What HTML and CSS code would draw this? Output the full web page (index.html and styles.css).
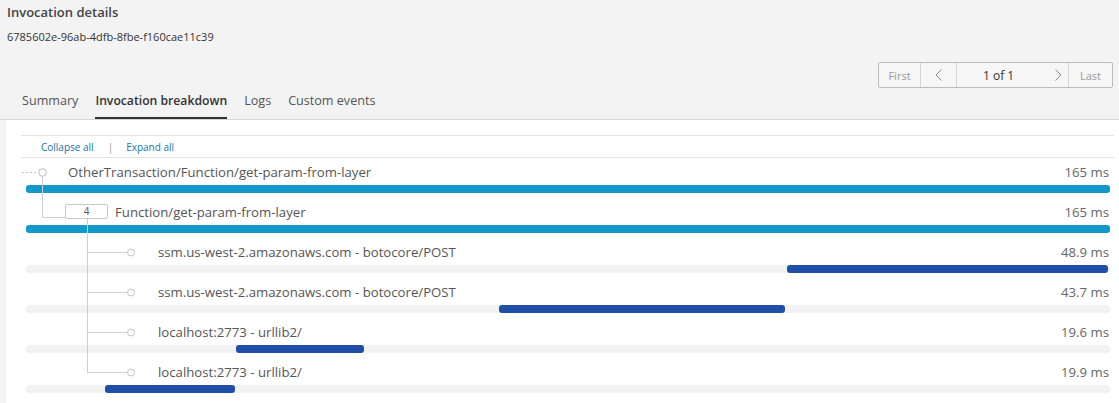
FILE: index.html
```html
<!DOCTYPE html>
<html lang="en">
<head>
<meta charset="utf-8">
<title>Invocation details</title>
<link rel="stylesheet" href="styles.css">
</head>
<body>
<header class="page-head">
  <h1 class="title">Invocation details</h1>
  <div class="uuid">6785602e-96ab-4dfb-8fbe-f160cae11c39</div>
</header>

<div class="pager-row">
  <div class="pager">
    <span class="pg-btn pg-first">First</span>
    <span class="pg-btn pg-prev"><svg width="8" height="12" viewBox="0 0 8 12"><polyline points="6.5,0.5 1,6 6.5,11.5" fill="none" stroke="#8a8a8a" stroke-width="1"/></svg></span>
    <span class="pg-mid"><span class="pg-count">1 of 1</span><svg class="pg-next" width="8" height="12" viewBox="0 0 8 12"><polyline points="1.5,0.5 7,6 1.5,11.5" fill="none" stroke="#8a8a8a" stroke-width="1"/></svg></span>
    <span class="pg-btn pg-last">Last</span>
  </div>
</div>

<nav class="tabs">
  <span class="tab">Summary</span>
  <span class="tab tab-active">Invocation breakdown</span>
  <span class="tab">Logs</span>
  <span class="tab">Custom events</span>
</nav>

<section class="panel">
  <div class="toolbar">
    <span class="link">Collapse all</span>
    <span class="sep">|</span>
    <span class="link">Expand all</span>
  </div>
  <div class="trace">
    <svg class="tree" width="140" height="220" viewBox="0 0 140 220">
      <line x1="1" y1="14.5" x2="17" y2="14.5" stroke="#c4c4c4" stroke-width="1" stroke-dasharray="2 2"/>
      <line x1="21.5" y1="18" x2="21.5" y2="59.5" stroke="#cfcfcf" stroke-width="1"/>
      <line x1="21.5" y1="59.5" x2="44" y2="59.5" stroke="#cfcfcf" stroke-width="1"/>
      <circle cx="21.5" cy="14.5" r="3.8" fill="#fff" stroke="#b9b9b9" stroke-width="1"/>
      <line x1="66.5" y1="60" x2="66.5" y2="214.5" stroke="#cfcfcf" stroke-width="1"/>
      <line x1="66.5" y1="94.5" x2="106" y2="94.5" stroke="#cfcfcf" stroke-width="1"/>
      <line x1="66.5" y1="134.5" x2="106" y2="134.5" stroke="#cfcfcf" stroke-width="1"/>
      <line x1="66.5" y1="174.5" x2="106" y2="174.5" stroke="#cfcfcf" stroke-width="1"/>
      <line x1="66.5" y1="214.5" x2="106" y2="214.5" stroke="#cfcfcf" stroke-width="1"/>
      <circle cx="110" cy="94.5" r="3.5" fill="#fff" stroke="#c4c4c4" stroke-width="1"/>
      <circle cx="110" cy="134.5" r="3.5" fill="#fff" stroke="#c4c4c4" stroke-width="1"/>
      <circle cx="110" cy="174.5" r="3.5" fill="#fff" stroke="#c4c4c4" stroke-width="1"/>
      <circle cx="110" cy="214.5" r="3.5" fill="#fff" stroke="#c4c4c4" stroke-width="1"/>
    </svg>

    <div class="row">
      <div class="row-head lvl-0"><span class="label">OtherTransaction/Function/get-param-from-layer</span><span class="time">165 ms</span></div>
      <div class="track"><div class="bar bar-root" style="margin-left:0%;width:100%"></div></div>
    </div>
    <div class="row">
      <div class="row-head lvl-1"><span class="count">4</span><span class="label">Function/get-param-from-layer</span><span class="time">165 ms</span></div>
      <div class="track"><div class="bar bar-root" style="margin-left:0%;width:100%"></div></div>
    </div>
    <div class="row">
      <div class="row-head lvl-2"><span class="label">ssm.us-west-2.amazonaws.com - botocore/POST</span><span class="time">48.9 ms</span></div>
      <div class="track"><div class="bar bar-seg" style="margin-left:70.2%;width:29.6%"></div></div>
    </div>
    <div class="row">
      <div class="row-head lvl-2"><span class="label">ssm.us-west-2.amazonaws.com - botocore/POST</span><span class="time">43.7 ms</span></div>
      <div class="track"><div class="bar bar-seg" style="margin-left:43.6%;width:26.4%"></div></div>
    </div>
    <div class="row">
      <div class="row-head lvl-2"><span class="label">localhost:2773 - urllib2/</span><span class="time">19.6 ms</span></div>
      <div class="track"><div class="bar bar-seg" style="margin-left:19.4%;width:11.8%"></div></div>
    </div>
    <div class="row">
      <div class="row-head lvl-2"><span class="label">localhost:2773 - urllib2/</span><span class="time">19.9 ms</span></div>
      <div class="track"><div class="bar bar-seg" style="margin-left:7.3%;width:12%"></div></div>
    </div>
  </div>
</section>
</body>
</html>
```

FILE: styles.css
```css
* { box-sizing: border-box; }

html, body {
  margin: 0;
  padding: 0;
  height: 100%;
}

body {
  background: #f3f3f3;
  font-family: "Open Sans", "Noto Sans", "DejaVu Sans", sans-serif;
  color: #333;
  overflow: hidden;
}

.page-head {
  padding-left: 7px;
}

.title {
  margin: 0;
  font-size: 13px;
  font-weight: 600;
  line-height: 24px;
  color: #444;
}

.uuid {
  margin-top: 4px;
  font-size: 11px;
  line-height: 18px;
  color: #333;
}

.pager-row {
  display: flex;
  justify-content: flex-end;
  padding-right: 6px;
  margin-top: 16px;
}

.pager {
  display: flex;
  height: 26px;
  border: 1px solid #bcbcbc;
  border-radius: 2px;
  background: #f6f6f6;
}

.pg-btn,
.pg-mid {
  display: flex;
  align-items: center;
  justify-content: center;
  font-size: 11px;
  color: #9a9a9a;
}

.pg-first { width: 42px; border-right: 1px solid #d4d4d4; }
.pg-prev { width: 36px; border-right: 1px solid #d4d4d4; }
.pg-mid {
  width: 112px;
  border-right: 1px solid #d4d4d4;
  justify-content: flex-start;
  padding-left: 26px;
}
.pg-count { font-size: 12px; color: #333; }
.pg-next { margin-left: 40px; }
.pg-last { width: 43px; }

.tabs {
  display: flex;
  height: 32px;
  padding-left: 22px;
  border-bottom: 1px solid #d6d6d6;
  gap: 17px;
}

.tab {
  padding-top: 4px;
  font-size: 12.6px;
  line-height: 18px;
  color: #555;
  border-bottom: 2px solid transparent;
}

.tab-active {
  font-size: 12.2px;
  font-weight: 600;
  color: #333;
  border-bottom-color: #333;
}

.panel {
  margin-left: 6px;
  background: #fff;
  padding: 15px 5px 0 15px;
  height: 300px;
}

.toolbar {
  display: flex;
  align-items: center;
  height: 23px;
  padding-left: 20px;
  border-top: 1px solid #e3e3e3;
  border-bottom: 1px solid #e3e3e3;
  font-size: 10px;
}

.link { color: #1574a8; }
.sep { color: #999; margin: 0 13px 0 14px; font-size: 10px; }

.trace {
  position: relative;
  padding: 0 4px 0 5px;
}

.tree {
  position: absolute;
  left: 0;
  top: 0;
  z-index: 2;
  pointer-events: none;
}

.row {
  height: 40px;
}

.row-head {
  display: flex;
  align-items: center;
  height: 27px;
  font-size: 13.2px;
  color: #555;
}

.lvl-0 { padding-left: 42px; }
.lvl-1 { padding-left: 39px; }
.lvl-2 { padding-left: 132px; }

.label { flex: 1; white-space: nowrap; }

.time {
  color: #666;
  padding-right: 1px;
}

.count {
  width: 43px;
  height: 15px;
  margin-right: 7px;
  border: 1px solid #c8c8c8;
  border-radius: 2px;
  font-size: 10px;
  line-height: 13px;
  text-align: center;
  color: #555;
}

.track {
  height: 8px;
  border-radius: 4px;
  background: #f2f2f2;
  display: flex;
}

.bar {
  height: 8px;
  border-radius: 3px;
}

.bar-root { background: #1298c9; }
.bar-seg { background: #1f4fa6; }
```
